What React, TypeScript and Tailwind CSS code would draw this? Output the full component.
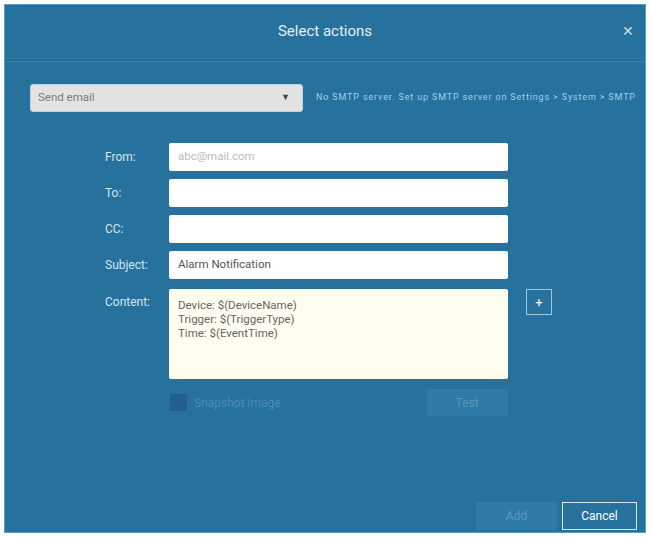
import React from "react";

export default function App() {
  const font = { fontFamily: "Roboto, 'Liberation Sans', sans-serif" };
  const rows = [
    { label: "From:", value: "", placeholder: "abc@mail.com" },
    { label: "To:", value: "", placeholder: "" },
    { label: "CC:", value: "", placeholder: "" },
    { label: "Subject:", value: "Alarm Notification", placeholder: "" },
  ];
  return (
    <div className="w-[651px] h-[537px] bg-white p-[4px] pr-[5px]" style={font}>
      <div className="w-full h-full bg-[#27719d] flex flex-col border border-[#5b9cc4]">
        <div className="h-[56px] flex items-center justify-center relative border-b border-[#1f6690] shadow-[0_1px_0_#3a83ad]">
          <span className="text-[15px] text-[#e3eef5] -mt-[2px]">Select actions</span>
          <span className="absolute right-[11px] top-[19px] text-[#c9dfec] text-[14px] leading-none">✕</span>
        </div>
        <div className="flex items-center mt-[23px] pl-[25px]">
          <div className="w-[273px] h-[28px] bg-[#e2e2e2] rounded-[3px] flex items-center justify-between px-[7px] border border-[#b9d3e3]">
            <span className="text-[11.5px] text-[#7a7a7a]">Send email</span>
            <span className="text-[9px] text-[#444] mr-[5px]">▼</span>
          </div>
          <span className="ml-[13px] text-[9px] tracking-[0.85px] text-[#9fd0ea] whitespace-nowrap">
            No SMTP server. Set up SMTP server on Settings &gt; System &gt; SMTP
          </span>
        </div>
        <div className="mt-[31px] flex flex-col gap-[8px]">
          {rows.map((r) => (
            <div key={r.label} className="flex items-center">
              <div className="w-[164px] pl-[100px] text-[12px] text-[#cfe6f4]">{r.label}</div>
              <div className="w-[339px] h-[28px] bg-white rounded-[2px] flex items-center px-[9px] text-[11.5px]">
                {r.value ? (
                  <span className="text-[#555]">{r.value}</span>
                ) : (
                  <span className="text-[#bbb]">{r.placeholder}</span>
                )}
              </div>
            </div>
          ))}
          <div className="flex items-start mt-[2px]">
            <div className="w-[164px] pl-[100px] text-[12px] text-[#cfe6f4] pt-[4px]">Content:</div>
            <div className="w-[339px] h-[90px] bg-[#fffcf0] rounded-[2px] px-[9px] pt-[9px] text-[11.5px] leading-[14px] text-[#666]">
              <div>Device: $(DeviceName)</div>
              <div>Trigger: $(TriggerType)</div>
              <div>Time: $(EventTime)</div>
            </div>
            <div className="ml-[18px] w-[26px] h-[26px] border border-[#9cc8e2] flex items-center justify-center text-white text-[13px] leading-none">+</div>
          </div>
        </div>
        <div className="flex items-center mt-[10px] pl-[165px]">
          <div className="w-[17px] h-[17px] bg-[#22608b]" />
          <span className="ml-[7px] text-[12px] text-[#4d8cb5]">Snapshot image</span>
          <div className="ml-[146px] w-[81px] h-[27px] bg-[#2f7aa6] flex items-center justify-center text-[12px] text-[#5796bd]">Test</div>
        </div>
        <div className="flex-1" />
        <div className="flex justify-end items-center gap-[5px] pr-[8px] pb-[2px]">
          <div className="w-[81px] h-[28px] bg-[#2f7aa6] flex items-center justify-center text-[12px] text-[#5a97bd]">Add</div>
          <div className="w-[75px] h-[28px] border border-[#d6e8f3] flex items-center justify-center text-[12px] text-white">Cancel</div>
        </div>
      </div>
    </div>
  );
}
